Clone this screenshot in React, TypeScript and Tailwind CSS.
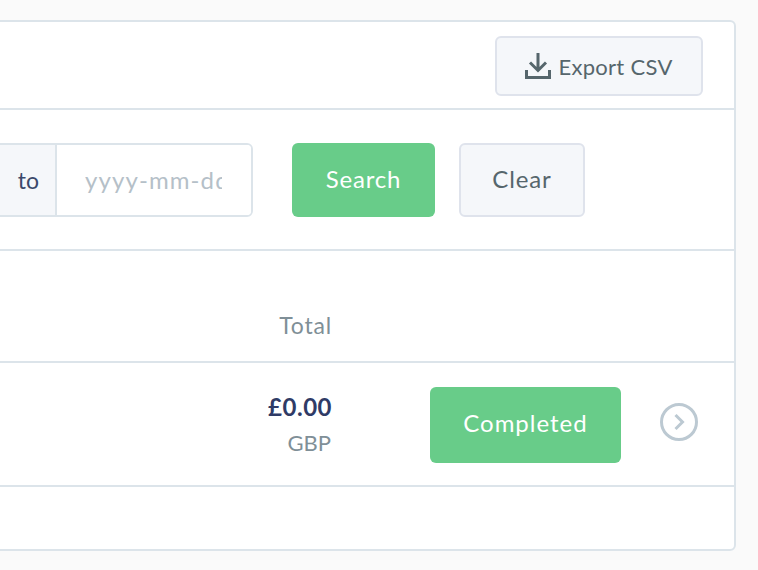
const App: React.FC = () => {
  return (
    <div className="h-[570px] w-[758px] overflow-hidden bg-[#fafafa] pt-[20px] font-['Lato',sans-serif]">
      <div className="ml-[-10px] h-[531px] w-[746px] rounded-[6px] border-2 border-[#dce4ea] bg-white">
        {/* toolbar */}
        <div className="flex h-[88px] items-start justify-end border-b-2 border-[#dce4ea] pr-[31px] pt-[14px]">
          <button className="flex h-[60px] w-[208px] items-center justify-center gap-[7px] rounded-[6px] border-2 border-[#dfe3ec] bg-[#f5f7fa] text-[22px] tracking-[0.3px] text-[#56666c]">
            <svg width="26" height="26" viewBox="0 0 26 26" fill="none" stroke="#56666c" strokeWidth="3">
              <path d="M13 0v17M5 9.5l8 8 8-8" />
              <path d="M1.5 17v7.5h23V17" />
            </svg>
            Export CSV
          </button>
        </div>

        {/* filters */}
        <div className="flex h-[141px] items-start border-b-2 border-[#dce4ea] pt-[33px]">
          <div className="flex h-[74px] w-[261px] overflow-hidden rounded-[6px] border-2 border-[#dce4ea]">
            <span className="flex w-[63px] items-center justify-end border-r-2 border-[#dce4ea] bg-[#f5f7fa] pr-[16px] text-[23px] text-[#3b4a6b]">
              to
            </span>
            <input
              placeholder="yyyy-mm-dd"
              className="w-[194px] bg-white pl-[28px] pr-[29px] text-[24px] tracking-[1.1px] placeholder:text-[#b5c0c8]"
            />
          </div>
          <button className="ml-[39px] h-[74px] w-[143px] rounded-[6px] bg-[#68cc89] pb-[2px] text-[24px] tracking-[0.8px] text-white">
            Search
          </button>
          <button className="ml-[24px] h-[74px] w-[126px] rounded-[6px] border-2 border-[#dfe3ec] bg-[#f5f7fa] pb-[2px] text-[24px] tracking-[0.9px] text-[#56666c]">
            Clear
          </button>
        </div>

        {/* table head */}
        <div className="flex h-[112px] items-end border-b-2 border-[#dce4ea] pb-[21px]">
          <span className="w-[340px] text-right text-[23px] leading-[30px] tracking-[0.8px] text-[#7f8f97]">Total</span>
        </div>

        {/* table row */}
        <div className="flex h-[124px] items-center border-b-2 border-[#dce4ea]">
          <div className="flex w-[340px] flex-col items-end">
            <span className="text-[24px] font-bold leading-[30px] tracking-[0.5px] text-[#2f3b66]">£0.00</span>
            <span className="mr-[1px] mt-[7px] text-[22px] leading-[28px] text-[#7f8f97]">GBP</span>
          </div>
          <div className="ml-[98px] mt-[2px] flex h-[76px] w-[191px] items-center justify-center rounded-[6px] bg-[#68cc89] pb-[4px] text-[24px] tracking-[1px] text-white">
            Completed
          </div>
          <svg className="mb-[4px] ml-[39px]" width="38" height="38" viewBox="0 0 38 38" fill="none" stroke="#bcc9d2" strokeWidth="3">
            <circle cx="19" cy="19" r="17.5" />
            <path d="M15.5 12l7 7-7 7" />
          </svg>
        </div>
      </div>
    </div>
  );
};

export default App;
